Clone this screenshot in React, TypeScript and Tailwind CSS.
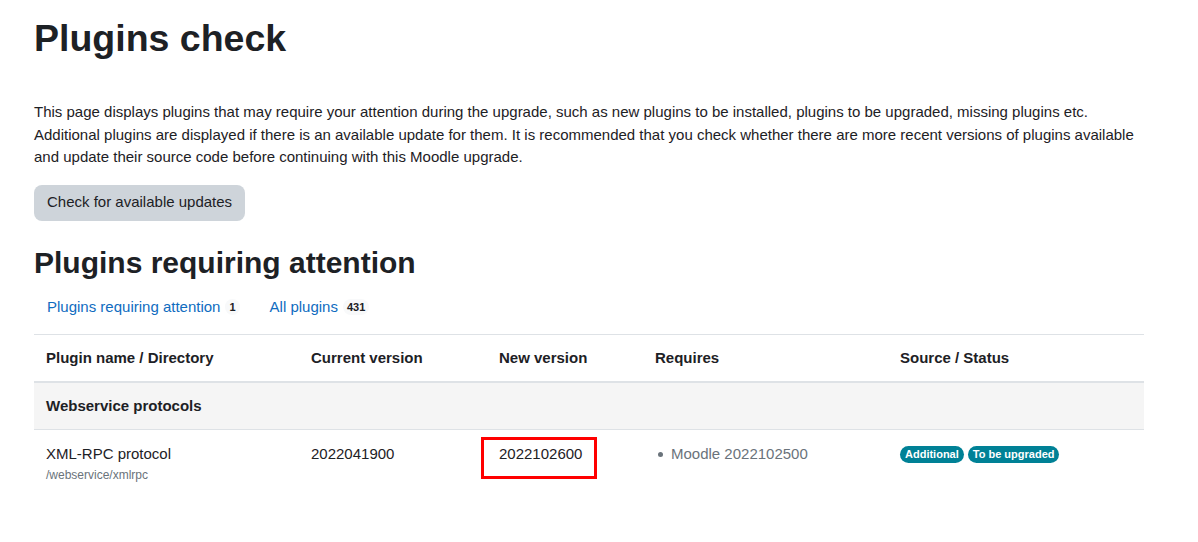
import React from "react";

const cols = ["w-[265px]", "w-[188px]", "w-[156px]", "w-[245px]", "w-[256px]"];

export default function App() {
  return (
    <div className="min-h-screen bg-white px-[34px] text-[15px] leading-[1.5] text-[#1d2125] [font-family:'Liberation_Sans',Arial,sans-serif]">
      <h2 className="pt-[16px] text-[37.5px] font-bold leading-[1.2]">Plugins check</h2>

      <p className="mt-[40px] w-[1110px]">
        This page displays plugins that may require your attention during the upgrade, such as new plugins to be installed, plugins to be upgraded, missing plugins etc. Additional plugins are displayed if there is an available update for them. It is recommended that you check whether there are more recent versions of plugins available and update their source code before continuing with this Moodle upgrade.
      </p>

      <button className="mt-[16px] h-[36px] rounded-[8px] bg-[#ced4da] px-[13px] text-[15px] text-[#1d2125]">
        Check for available updates
      </button>

      <h3 className="mt-[24px] text-[30px] font-bold leading-[1.2]">Plugins requiring attention</h3>

      <div className="mt-[7px] flex items-center text-[#0f6cbf]">
        <a className="flex items-center py-[8px] pl-[13px] pr-[17px]">
          Plugins requiring attention
          <span className="ml-[5px] rounded-full bg-[#f8f9fa] px-[4px] text-[11px] font-bold leading-[16px] text-[#1d2125]">1</span>
        </a>
        <a className="flex items-center py-[8px] pl-[13px]">
          All plugins
          <span className="ml-[5px] rounded-full bg-[#f8f9fa] px-[4px] text-[11px] font-bold leading-[16px] text-[#1d2125]">431</span>
        </a>
      </div>

      <table className="mt-[8px] w-[1110px] border-collapse">
        <thead>
          <tr className="border-t border-b-2 border-t-[#dee2e6] border-b-[#dee2e6] text-left">
            {["Plugin name / Directory", "Current version", "New version", "Requires", "Source / Status"].map((h, i) => (
              <th key={h} className={`${cols[i]} h-[47px] px-[12px] align-middle font-bold`}>{h}</th>
            ))}
          </tr>
        </thead>
        <tbody>
          <tr className="border-b border-[#dee2e6] bg-[#f5f5f5]">
            <td colSpan={5} className="h-[48px] px-[12px] font-bold">Webservice protocols</td>
          </tr>
          <tr className="align-top">
            <td className="px-[12px] pt-[13px]">
              <div>XML-RPC protocol</div>
              <div className="text-[12px] leading-[1.5] text-[#6a737b]">/webservice/xmlrpc</div>
            </td>
            <td className="px-[12px] pt-[13px]">2022041900</td>
            <td className="relative px-[12px] pt-[13px]">
              2022102600
              <div className="absolute left-[-6px] top-[7px] h-[42px] w-[116px] border-[3px] border-[#ff0000]" />
            </td>
            <td className="px-[12px] pt-[13px] text-[#6a737b]">
              <ul className="flex items-center">
                <li className="flex items-center">
                  <span className="mr-[8px] ml-[3px] inline-block h-[5px] w-[5px] rounded-full bg-[#6a737b]" />
                  Moodle 2022102500
                </li>
              </ul>
            </td>
            <td className="px-[12px] pt-[16px]">
              <div className="flex gap-[4px]">
                <span className="rounded-full bg-[#008196] px-[5px] text-[11px] font-bold leading-[17px] text-white">Additional</span>
                <span className="rounded-full bg-[#008196] px-[5px] text-[11px] font-bold leading-[17px] text-white">To be upgraded</span>
              </div>
            </td>
          </tr>
        </tbody>
      </table>
    </div>
  );
}
